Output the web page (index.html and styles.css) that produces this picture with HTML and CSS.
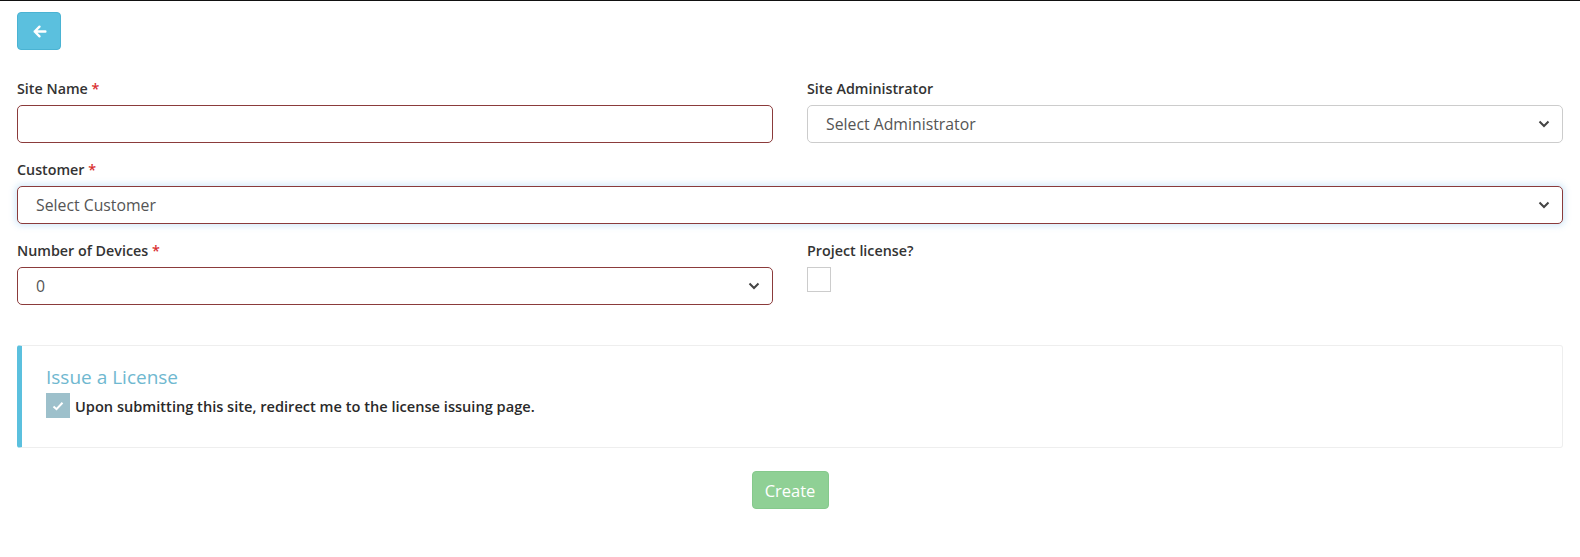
FILE: index.html
```html
<!DOCTYPE html>
<html>
<head>
<meta charset="utf-8">
<link rel="stylesheet" href="styles.css">
</head>
<body>
<div class="page">
  <div class="toolbar">
    <button class="btn-back" type="button" aria-label="Back">
      <svg width="15" height="15" viewBox="0 0 14 14"><path d="M12.5 7H2.5M7 2.5L2.5 7L7 11.5" fill="none" stroke="#fff" stroke-width="2.2" stroke-linecap="round" stroke-linejoin="round"/></svg>
    </button>
  </div>

  <div class="row">
    <div class="field">
      <label class="lbl">Site Name <span class="req">*</span></label>
      <div class="control invalid"></div>
    </div>
    <div class="field">
      <label class="lbl">Site Administrator</label>
      <div class="control select">
        <span class="val">Select Administrator</span>
        <svg class="caret" width="12" height="8" viewBox="0 0 12 8"><path d="M1.5 1.5L6 6L10.5 1.5" fill="none" stroke="#444" stroke-width="2"/></svg>
      </div>
    </div>
  </div>

  <div class="field full">
    <label class="lbl">Customer <span class="req">*</span></label>
    <div class="control select invalid focus">
      <span class="val">Select Customer</span>
      <svg class="caret" width="12" height="8" viewBox="0 0 12 8"><path d="M1.5 1.5L6 6L10.5 1.5" fill="none" stroke="#444" stroke-width="2"/></svg>
    </div>
  </div>

  <div class="row">
    <div class="field">
      <label class="lbl">Number of Devices <span class="req">*</span></label>
      <div class="control select invalid">
        <span class="val">0</span>
        <svg class="caret" width="12" height="8" viewBox="0 0 12 8"><path d="M1.5 1.5L6 6L10.5 1.5" fill="none" stroke="#444" stroke-width="2"/></svg>
      </div>
    </div>
    <div class="field">
      <label class="lbl">Project license?</label>
      <div class="checkbox"></div>
    </div>
  </div>

  <div class="callout">
    <h4 class="callout-title">Issue a License</h4>
    <div class="check-line">
      <span class="checked">
        <svg width="14" height="12" viewBox="0 0 14 12"><path d="M2.5 6.5L5.5 9.2L11.5 2.8" fill="none" stroke="#fff" stroke-width="2"/></svg>
      </span>
      <span class="check-text">Upon submitting this site, redirect me to the license issuing page.</span>
    </div>
  </div>

  <div class="actions">
    <button class="btn-create" type="button">Create</button>
  </div>
</div>
</body>
</html>
```

FILE: styles.css
```css
html, body {
  margin: 0;
  padding: 0;
  background: #fff;
}
body {
  border-top: 1px solid #111;
  font-family: "Open Sans", "Noto Sans", sans-serif;
  color: #333;
}
.page {
  padding: 11px 17px 0 17px;
}
.toolbar {
  height: 38px;
  margin-bottom: 29px;
}
.btn-back {
  width: 44px;
  height: 38px;
  border: 1px solid #4ab3d3;
  border-radius: 4px;
  background: #5bc0de;
  display: flex;
  align-items: center;
  justify-content: center;
  padding: 0;
  cursor: pointer;
}
.row {
  display: grid;
  grid-template-columns: 1fr 1fr;
  column-gap: 34px;
}
.field {
  margin-bottom: 17px;
}
.lbl {
  display: block;
  font-size: 14.3px;
  font-weight: 600;
  line-height: 20px;
  height: 20px;
  margin-bottom: 6px;
  color: #333;
}
.req {
  color: #d9302f;
}
.control {
  box-sizing: border-box;
  height: 38px;
  border: 1px solid #ccc;
  border-radius: 5px;
  background: #fff;
  display: flex;
  align-items: center;
  padding: 0 12px 0 18px;
}
.control.invalid {
  border-color: #8b3b3b;
}
.control.focus {
  box-shadow: 0 0 6px 2px rgba(102, 175, 233, 0.28);
}
.select .val {
  flex: 1;
  font-size: 15.8px;
  color: #555;
}
.caret {
  flex: none;
}
.checkbox {
  box-sizing: border-box;
  width: 24px;
  height: 25px;
  border: 1px solid #ccc;
  background: #fff;
}
.callout {
  margin-top: 23px;
  box-sizing: border-box;
  height: 103px;
  border: 1px solid #eee;
  border-left: 5px solid #5bc0de;
  border-radius: 3px;
  padding: 19px 24px 0 24px;
}
.callout-title {
  margin: 0;
  font-size: 19px;
  font-weight: 400;
  line-height: 24px;
  color: #6fb8d0;
}
.check-line {
  display: flex;
  align-items: center;
  margin-top: 4px;
}
.checked {
  width: 24px;
  height: 25px;
  background: #9dc0cb;
  display: flex;
  align-items: center;
  justify-content: center;
  margin-right: 5px;
  flex: none;
}
.check-text {
  font-size: 14.6px;
  font-weight: 600;
  color: #2a2a2a;
}
.actions {
  display: flex;
  justify-content: center;
  margin-top: 23px;
}
.btn-create {
  width: 77px;
  height: 38px;
  border: 1px solid #85c98c;
  border-radius: 4px;
  background: #8fd095;
  color: #fff;
  font-family: "Open Sans", "Noto Sans", sans-serif;
  font-size: 16.5px;
  padding: 0;
}
```
